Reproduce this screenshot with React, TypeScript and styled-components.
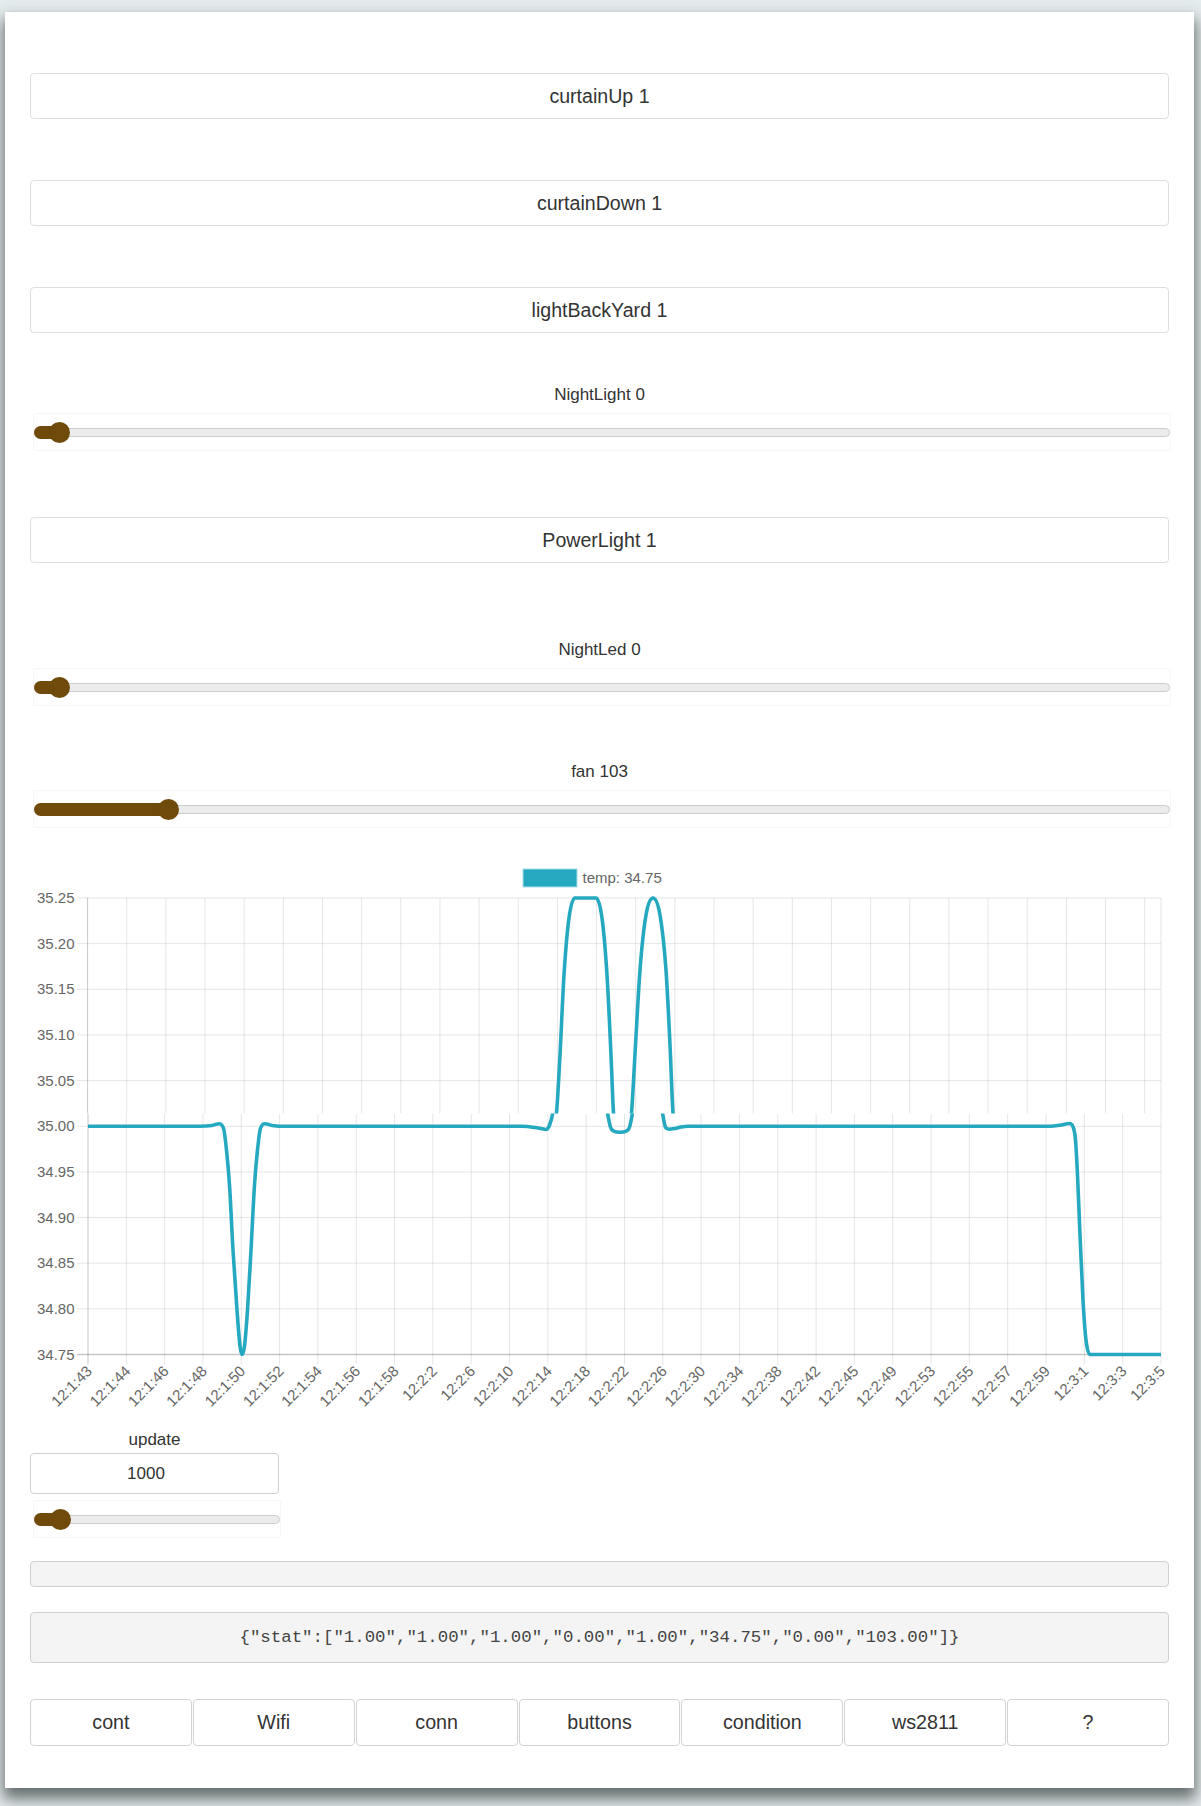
import React from "react";
import styled, { createGlobalStyle } from "styled-components";

const Global = createGlobalStyle`
  html, body { margin: 0; padding: 0; }
  body {
    background: #e5eced;
    font-family: "Liberation Sans", Arial, sans-serif;
    color: #333;
    height: 1806px;
    overflow: hidden;
  }
`;

const Card = styled.div`
  margin: 12px 0 0 5px;
  width: 1189px;
  box-sizing: border-box;
  background: #fff;
  padding: 61px 25px 42px 25px;
  display: flex;
  flex-direction: column;
  box-shadow: 0 9px 14px 2px rgba(60, 68, 68, 0.75);
`;

const Btn = styled.div<{ $mt: number }>`
  margin-top: ${(p) => p.$mt}px;
  height: 46px;
  box-sizing: border-box;
  border: 1px solid #dedede;
  border-radius: 4px;
  display: flex;
  align-items: center;
  justify-content: center;
  font-size: 19.6px;
  color: #333;
`;

const Label = styled.div<{ $mt: number }>`
  margin-top: ${(p) => p.$mt}px;
  height: 20px;
  line-height: 20px;
  text-align: center;
  font-size: 17px;
  color: #333;
`;

const SliderBox = styled.div<{ $mt: number }>`
  margin: ${(p) => p.$mt}px -2px 0 3px;
  height: 38px;
  box-sizing: border-box;
  border: 1px solid #f6f6f6;
  border-radius: 3px;
  display: flex;
  align-items: center;
`;

const Track = styled.div`
  position: relative;
  flex: 1;
  height: 9px;
  box-sizing: border-box;
  background: #ececec;
  border: 1px solid #cdcdcd;
  border-radius: 5px;
`;

const Fill = styled.div`
  position: absolute;
  left: -1px;
  top: -3px;
  height: 13px;
  background: #6f4a0a;
  border-radius: 7px 0 0 7px;
`;

const Thumb = styled.div`
  position: absolute;
  top: 50%;
  width: 21px;
  height: 21px;
  margin: -10.5px 0 0 -10.5px;
  border-radius: 50%;
  background: #6f4a0a;
`;

const Slider: React.FC<{ mt: number; frac: number }> = ({ mt, frac }) => {
  const pos = `calc(24px + ${frac} * (100% - 48px))`;
  return (
    <SliderBox $mt={mt}>
      <Track>
        <Fill style={{ width: pos }} />
        <Thumb style={{ left: pos }} />
      </Track>
    </SliderBox>
  );
};

const ChartSvg = styled.svg`
  margin-top: 27px;
  display: block;
  width: 1139px;
  height: 560px;
  font-family: "Liberation Sans", Arial, sans-serif;
`;

const UpdateCol = styled.div`
  margin-top: 15px;
  width: 249px;
  display: flex;
  flex-direction: column;
`;

const NumInput = styled.div`
  margin-top: 3px;
  height: 41px;
  box-sizing: border-box;
  border: 1px solid #cfcfcf;
  border-radius: 4px;
  display: flex;
  align-items: center;
  justify-content: center;
  padding-right: 17px;
  font-size: 17px;
  color: #333;
`;

const GrayBar = styled.div`
  margin-top: 23px;
  height: 26px;
  box-sizing: border-box;
  background: #f4f4f4;
  border: 1px solid #d0d0d0;
  border-radius: 4px;
`;

const JsonBox = styled.div`
  margin-top: 25px;
  height: 51px;
  box-sizing: border-box;
  background: #f4f4f4;
  border: 1px solid #d0d0d0;
  border-radius: 4px;
  display: flex;
  align-items: center;
  justify-content: center;
  font-family: "Liberation Mono", "Courier New", monospace;
  font-size: 17.4px;
  color: #444;
  white-space: pre;
`;

const Tabs = styled.div`
  margin-top: 36px;
  display: grid;
  grid-template-columns: repeat(7, 1fr);
  gap: 1px;
`;

const Tab = styled.div`
  height: 47px;
  box-sizing: border-box;
  border: 1px solid #d3d3d3;
  border-radius: 4px;
  display: flex;
  align-items: center;
  justify-content: center;
  font-size: 19.7px;
  color: #333;
`;

const PT = 898;
const PB = 1354.5;
const YS = (PB - PT) / 10;
const X0 = 88;
const DX = 38.32;
const XR = 1161;
const TEAL = "#25a9c0";

const xLabels = [
  "12:1:43", "12:1:44", "12:1:46", "12:1:48", "12:1:50", "12:1:52", "12:1:54",
  "12:1:56", "12:1:58", "12:2:2", "12:2:6", "12:2:10", "12:2:14", "12:2:18",
  "12:2:22", "12:2:26", "12:2:30", "12:2:34", "12:2:38", "12:2:42", "12:2:45",
  "12:2:49", "12:2:53", "12:2:55", "12:2:57", "12:2:59", "12:3:1", "12:3:3", "12:3:5",
];
const yLabels = ["35.25", "35.20", "35.15", "35.10", "35.05", "35.00", "34.95", "34.90", "34.85", "34.80", "34.75"];

function smooth(pts: number[][]): string {
  const n = pts.length;
  const slopes: number[] = [];
  for (let i = 0; i < n; i++) {
    const p = pts[i];
    const a = pts[i - 1];
    const b = pts[i + 1];
    if (!a || !b) {
      const q = a || b;
      slopes.push(q ? (p[1] - q[1]) / (p[0] - q[0]) : 0);
      continue;
    }
    const d0 = (p[1] - a[1]) / (p[0] - a[0]);
    const d1 = (b[1] - p[1]) / (b[0] - p[0]);
    if (d0 * d1 <= 0) {
      slopes.push(0);
    } else {
      let m = (d0 + d1) / 2;
      const lim = 3 * Math.min(Math.abs(d0), Math.abs(d1));
      if (Math.abs(m) > lim) m = Math.sign(m) * lim;
      slopes.push(m);
    }
  }
  let d = `M ${pts[0][0]} ${pts[0][1]}`;
  for (let i = 0; i < n - 1; i++) {
    const p = pts[i];
    const q = pts[i + 1];
    const h = (q[0] - p[0]) / 3;
    d += ` C ${p[0] + h} ${p[1] + slopes[i] * h} ${q[0] - h} ${q[1] - slopes[i + 1] * h} ${q[0]} ${q[1]}`;
  }
  return d;
}

const Y35 = PT + 5 * YS;

const lower1 = [
  [88, Y35], [200, Y35], [212, Y35 - 0.8], [219, Y35 - 2.5], [223.5, Y35 + 2], [226.5, 1150],
  [229.5, 1185], [233, 1250], [237, 1310], [240, 1346], [242, PB], [244.5, 1346], [247.5, 1310],
  [251, 1250], [254.5, 1185], [257.5, 1150], [260.5, Y35 + 2], [265, Y35 - 2.5], [272, Y35 - 0.8],
  [280, Y35], [522, Y35], [535, Y35 + 1.2], [546, Y35 + 3.2], [549.5, Y35 - 1], [553, 1112], [556, 1090],
];
const lower2 = [
  [603, 1090], [607.5, 1113], [610.5, Y35 + 1], [614, Y35 + 5], [620, Y35 + 6], [626, Y35 + 5],
  [629.5, Y35 + 1], [632.5, 1113], [636, 1090],
];
const lower3 = [
  [659, 1090], [662.5, 1113], [665.5, Y35 + 1], [669, Y35 + 3], [675, Y35 + 2.2], [681, Y35 + 0.8],
  [688, Y35], [1050, Y35], [1060, Y35 - 1], [1069.5, Y35 - 2.8], [1073, Y35 + 0.5], [1075.5, 1140],
  [1077.5, 1175], [1080, 1235], [1083, 1300], [1086, 1340], [1090, PB], [1161, PB],
];
const upper1 = [
  [550, 1140], [556.5, 1113], [560, 1055], [564, 975], [569, 918], [575, PT], [596, PT], [602, 918],
  [607, 975], [611, 1055], [613.5, 1113], [617, 1140],
];
const upper2 = [
  [627, 1140], [631.5, 1113], [635.5, 1045], [640, 970], [646, 915], [653, PT], [660, 915],
  [666, 970], [670, 1045], [673, 1113], [677, 1140],
];

const Chart: React.FC = () => {
  const upperX: number[] = [];
  for (let x = 87.6; x <= XR + 0.5; x += 39.15) upperX.push(x);
  const cut = 1113.5;
  return (
    <ChartSvg viewBox="30 855 1139 560">
      <defs>
        <clipPath id="clipUp">
          <rect x={30} y={880} width={1139} height={cut - 880} />
        </clipPath>
        <clipPath id="clipLow">
          <rect x={30} y={cut} width={1139} height={300} />
        </clipPath>
      </defs>
      <rect x={523} y={869} width={54} height={18} fill={TEAL} stroke="#a8dde6" strokeWidth={1} />
      <text x={582.5} y={883} fontSize={15} fill="#666">temp: 34.75</text>
      {yLabels.map((l, k) => {
        const y = PT + k * YS;
        return (
          <g key={l}>
            <line x1={77} x2={XR} y1={y} y2={y} stroke={k === 10 ? "rgba(0,0,0,0.22)" : "rgba(0,0,0,0.1)"} strokeWidth={k === 10 ? 1.5 : 1} />
            <text x={74.5} y={y + 5} fontSize={15} fill="#666" textAnchor="end">{l}</text>
          </g>
        );
      })}
      <g clipPath="url(#clipUp)">
        {upperX.map((x, i) => (
          <line key={i} x1={x} x2={x} y1={PT} y2={cut} stroke={i === 0 ? "rgba(0,0,0,0.22)" : "rgba(0,0,0,0.1)"} />
        ))}
        <line x1={XR} x2={XR} y1={PT} y2={cut} stroke="rgba(0,0,0,0.1)" />
        <path d={smooth(upper1)} fill="none" stroke={TEAL} strokeWidth={3.6} strokeLinejoin="round" />
        <path d={smooth(upper2)} fill="none" stroke={TEAL} strokeWidth={3.6} strokeLinejoin="round" />
      </g>
      <g clipPath="url(#clipLow)">
        {xLabels.map((l, i) => {
          const x = X0 + i * DX;
          return (
            <line key={l} x1={x} x2={x} y1={cut} y2={PB + 10} stroke={i === 0 ? "rgba(0,0,0,0.22)" : "rgba(0,0,0,0.1)"} />
          );
        })}
        <path d={smooth(lower1)} fill="none" stroke={TEAL} strokeWidth={3.6} strokeLinejoin="round" />
        <path d={smooth(lower2)} fill="none" stroke={TEAL} strokeWidth={3.6} strokeLinejoin="round" />
        <path d={smooth(lower3)} fill="none" stroke={TEAL} strokeWidth={3.6} strokeLinejoin="round" />
      </g>
      {xLabels.map((l, i) => {
        const x = X0 + i * DX + 5;
        const y = 1372;
        return (
          <text key={l} x={x} y={y} fontSize={15} fill="#666" textAnchor="end" transform={`rotate(-45 ${x} ${y})`}>
            {l}
          </text>
        );
      })}
    </ChartSvg>
  );
};

const tabs = ["cont", "Wifi", "conn", "buttons", "condition", "ws2811", "?"];

export default function App() {
  return (
    <>
      <Global />
      <Card>
        <Btn $mt={0}>curtainUp 1</Btn>
        <Btn $mt={61}>curtainDown 1</Btn>
        <Btn $mt={61}>lightBackYard 1</Btn>
        <Label $mt={52}>NightLight 0</Label>
        <Slider mt={8} frac={0} />
        <Btn $mt={66}>PowerLight 1</Btn>
        <Label $mt={77}>NightLed 0</Label>
        <Slider mt={8} frac={0} />
        <Label $mt={56}>fan 103</Label>
        <Slider mt={8} frac={103 / 1023} />
        <Chart />
        <UpdateCol>
          <Label $mt={0}>update</Label>
          <NumInput>1000</NumInput>
          <Slider mt={6} frac={0.01} />
        </UpdateCol>
        <GrayBar />
        <JsonBox>{'{"stat":["1.00","1.00","1.00","0.00","1.00","34.75","0.00","103.00"]}'}</JsonBox>
        <Tabs>
          {tabs.map((t) => (
            <Tab key={t}>{t}</Tab>
          ))}
        </Tabs>
      </Card>
    </>
  );
}
